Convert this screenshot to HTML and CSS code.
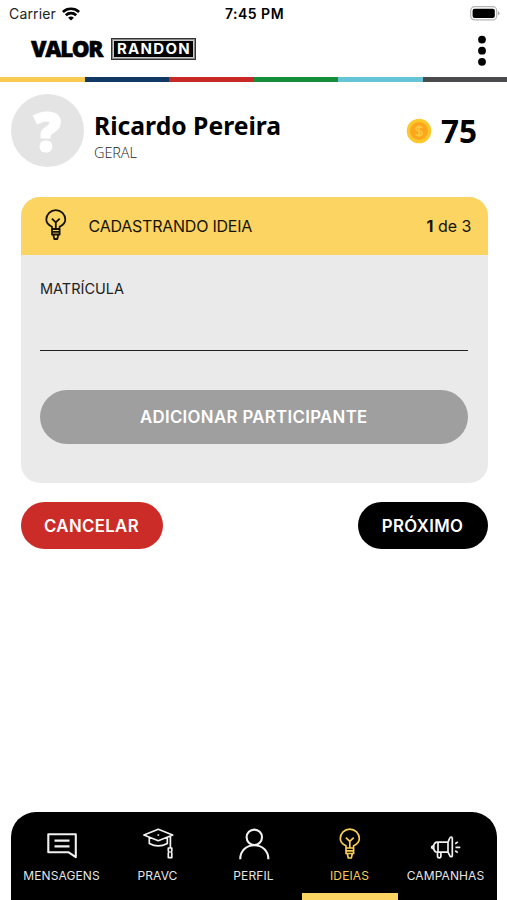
FILE: index.html
```html
<!DOCTYPE html>
<html lang="pt-BR">
<head>
<meta charset="utf-8">
<title>Valor Randon</title>
<link rel="stylesheet" href="styles.css">
</head>
<body>
<div class="app">
  <div class="status">
    <div class="carrier"><span>Carrier</span>
      <svg width="18" height="14" viewBox="0 0 18 14" fill="none" stroke="#000" stroke-width="2.7"><path d="M.9 4.900C5.400.7 12.600.7 17.100 4.900M3.800 8.200C6.800 5.400 11.200 5.400 14.200 8.200"/><path d="M9 13.600 6.100 10.700Q9 8.200 11.900 10.700Z" fill="#000" stroke="none"/></svg>
    </div>
    <span class="time">7:45 PM</span>
    <svg class="battery" width="31" height="15" viewBox="0 0 31 15"><rect x="1.700" y=".7" width="26" height="13.200" rx="4" fill="#fff" stroke="#b5b5b5" stroke-width="1.200"/><rect x="3.600" y="2.700" width="22.200" height="9.200" rx="2"/><path d="M29 5q3 2.300 0 4.600z" fill="#aaa"/></svg>
  </div>
  <header class="header">
    <div class="brand"><span class="valor">VALOR</span><span class="randon"><span>RANDON</span></span></div>
    <svg width="8" height="32" viewBox="0 0 8 32"><circle cx="4" cy="4.600" r="3.900"/><circle cx="4" cy="15.700" r="3.900"/><circle cx="4" cy="26.800" r="3.900"/></svg>
  </header>
  <div class="stripe"><i class="yellow"></i><i class="blue"></i><i class="red"></i><i class="green"></i><i class="cyan"></i><i class="gray"></i></div>
  <section class="profile">
    <div class="avatar"><span>?</span></div>
    <div class="who"><h1>Ricardo Pereira</h1><p>GERAL</p></div>
    <div class="points">
      <svg width="26" height="26" viewBox="0 0 26 26"><circle cx="13" cy="13" r="12.300" fill="#fdc82c"/><circle cx="13" cy="13" r="9" fill="#fba61e"/><path d="M16.300 9.800C15.500 8.400 10 8 10 10.800 10 13.500 16.300 12.300 16.300 15.300 16.300 18.100 10.500 17.900 9.700 16M13 7v12" fill="none" stroke="#fdca3c" stroke-width="1.500"/></svg>
      <b>75</b>
    </div>
  </section>
  <main class="card">
    <div class="card-head">
      <svg class="bulb" width="22" height="32" viewBox="0 0 22 32"><path d="M7 20V17.800C3.500 16.200 1.300 14 1.300 10.600a9.500 9.500 0 0 1 19 0c0 3.400-2.200 5.600-5.700 7.200V20zM7 20v5.500h7.600V20M7 22.800h7.600M8.300 25.700l1 4.300h3l1-4.300M6.900 9.600l3.900 3.800 3.900-3.800M10.800 13.400V20"/></svg>
      <h2>CADASTRANDO IDEIA</h2>
      <span class="step"><b>1</b> de 3</span>
    </div>
    <div class="card-body">
      <label for="matricula">MATRÍCULA</label>
      <input id="matricula" type="text">
      <button class="add">ADICIONAR PARTICIPANTE</button>
    </div>
  </main>
  <div class="actions"><button class="cancel">CANCELAR</button><button class="next">PRÓXIMO</button></div>
  <nav class="nav">
    <a><svg width="32" height="32" viewBox="0 0 32 32"><path d="M2.300 6.300h27.500v22.800l-7.500-4.900h-20zM8.500 12.600h15M8.500 18.400h15"/></svg><span>MENSAGENS</span></a>
    <a><svg class="thin" width="32" height="32" viewBox="0 0 32 32"><path d="M1.900 7 16.300 1.300 30.700 7 16.300 12.700zM7.300 9.500v6q9 4.800 18 0v-6M15.500 7h1.700M28.400 8v12M27 20h2.800v3l-.8 1 .8 1v4.600h-3.500V25l.8-1-.8-1v-3z"/></svg><span>PRAVC</span></a>
    <a><svg width="32" height="32" viewBox="0 0 32 32"><circle cx="16.300" cy="9.300" r="7.700"/><path d="M2.200 31.300C2.200 12.500 30.400 12.500 30.400 31.300"/></svg><span>PERFIL</span></a>
    <a class="active"><svg class="bulb" width="22" height="32" viewBox="0 0 22 32"><path d="M7 20V17.800C3.500 16.200 1.300 14 1.300 10.600a9.500 9.500 0 0 1 19 0c0 3.400-2.200 5.600-5.700 7.200V20zM7 20v5.500h7.600V20M7 22.800h7.600M8.300 25.700l1 4.300h3l1-4.300M6.900 9.600l3.900 3.800 3.900-3.800M10.800 13.400V20"/></svg><span>IDEIAS</span></a>
    <a><svg class="thin" width="32" height="32" viewBox="0 0 32 32"><path d="M18 14.200H7.500q-3.800 0-3.800 5t3.800 5H18zM8 14.200v10M3.700 17.500 1.700 18.700v1l2 1.200M18 14.200l1.800-4.200q.3-1 1.400-1t1.100 1.200v17.500q0 1-1.100 1t-1.400-1L18 24.200M7.500 24.200V28q0 1.800 1.700 1.800t1.700-1.800v-3.800M25.500 19.300h4.800M25.200 15.800l2.600-1.900M25.200 22.700l2.600 1.900"/></svg><span>CAMPANHAS</span></a>
  </nav>
</div>
</body>
</html>
```
FILE: styles.css
```css
* { box-sizing: border-box; }
body { margin: 0; background: #fff; color: #000; font-family: Inter, "Liberation Sans", sans-serif; }
svg { display: block; flex: none; }
h1, h2, p { margin: 0; }
button { border: 0; color: #fff; font: 600 16.8px/20px Inter, sans-serif; letter-spacing: .35px; padding: 0; }
.app { height: 900px; display: flex; flex-direction: column; }
.status { height: 27px; display: grid; grid-template-columns: 1fr auto 1fr; align-items: center; padding: 0 7px 0 9px; font-size: 14px; }
.carrier { display: flex; align-items: center; gap: 6px; color: #222; letter-spacing: .15px; }
.time { font-weight: 600; letter-spacing: .5px; }
.battery { justify-self: end; }
.header { height: 50px; display: flex; align-items: center; justify-content: space-between; padding: 0 21px 2px 31px; }
.brand { display: flex; align-items: center; gap: 8px; margin-bottom: 4px; }
.valor { font: 800 22.5px/24px "Open Sans", sans-serif; letter-spacing: -1.4px; width: 72px; white-space: nowrap; -webkit-text-stroke: .5px #000; }
.randon { border: 1px solid #333; padding: 1px; background: #888; }
.randon span { display: block; width: 81px; height: 18px; border: 1px solid #ccc; background: #000; color: #fff; text-align: center; font: 700 15px/16px Inter, sans-serif; letter-spacing: 1.3px; text-indent: 1px; }
.stripe { height: 4.5px; display: grid; grid-template-columns: repeat(6, 1fr); flex: none; }
.yellow { background: #f8cb50; }
.blue { background: #103966; }
.red { background: #c72926; }
.green { background: #168e39; }
.cyan { background: #65c5d6; }
.gray { background: #4b4b4d; }
.profile { height: 115px; flex: none; display: flex; align-items: flex-start; padding: 12.5px 30px 0 11px; }
.avatar { width: 73px; height: 73px; border-radius: 50%; background: #e4e4e4; color: #fff; text-align: center; font: 800 53px/73px "Open Sans", sans-serif; }
.avatar span { -webkit-text-stroke: 2px #fff; }
.who { margin: 15px 0 0 10px; font-family: "Noto Sans", sans-serif; }
h1 { font: 700 24.7px/34px "Noto Sans", sans-serif; white-space: nowrap; }
.who p { font: 300 14.5px/20px "Open Sans", sans-serif; letter-spacing: -.1px; color: #222; }
.points { margin: 15.5px 0 0 auto; display: flex; align-items: center; gap: 9px; }
.points b { font: 700 31.5px/42px "Noto Sans", sans-serif; }
.card { height: 286px; flex: none; margin: 0 19.5px 0 20.5px; background: #eaeaea; border-radius: 19px; overflow: hidden; }
.card-head { height: 58.5px; background: #fbd462; display: flex; align-items: center; padding: 0 16px 0 24px; color: #16130b; }
.card-head .bulb { margin-bottom: 1px; }
.bulb { fill: none; stroke: #16130b; stroke-width: 1.8; stroke-linejoin: round; }
h2 { margin-left: 22px; font-size: 16px; font-weight: 400; letter-spacing: -.23px; }
.step { margin-left: auto; font-size: 16px; }
.card-body { padding: 24px 20px 0 19.5px; display: flex; flex-direction: column; }
label { font-size: 14.5px; line-height: 20px; color: #222; }
input { height: 52px; border: 0; border-bottom: 1.5px solid #222; background: transparent; padding: 0; border-radius: 0; }
.add { height: 54px; border-radius: 27px; margin-top: 39px; background: #9f9f9f; }
.actions { display: flex; justify-content: space-between; padding: 19.5px 19.5px 0 20.5px; }
.actions button { height: 47px; border-radius: 23.5px; }
.actions .cancel { width: 142px; background: #cb2c27; }
.actions .next { width: 130px; background: #000; }
.nav { height: 88px; margin: auto 10px 0 11px; background: #000; border-radius: 25px 25px 0 0; padding: 0 2px; display: grid; grid-template-columns: repeat(5, 96px); justify-content: center; }
.nav a { display: flex; flex-direction: column; align-items: center; padding: 16px 1px 0 0; color: #e5e5e5; font-size: 12px; line-height: 16px; }
.nav span { margin-top: 8px; letter-spacing: .1px; }
.nav svg { fill: none; stroke: #f1f1f1; stroke-width: 2.1; stroke-linejoin: round; }
.nav .thin { stroke-width: 1.7; }
.nav .active { color: #f7cd58; border-bottom: 7px solid #fbd462; }
.nav .active svg { stroke: #f7cd58; stroke-width: 1.7; }
```
